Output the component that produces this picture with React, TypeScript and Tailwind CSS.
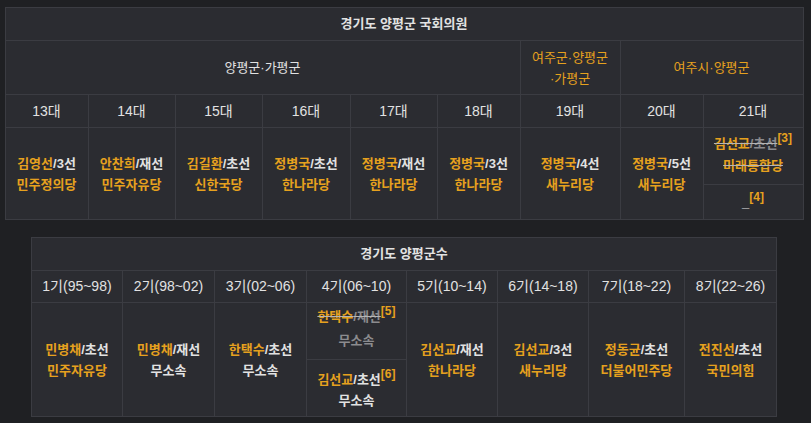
import React from "react";

const OR = "text-[#e6a11e]";
const WH = "text-[#e2e2e2]";
const GR = "text-[#8b8b8e]";

const cell = "border border-[#3b3c42] text-center align-middle p-0";

function Member({ name, term, party, partyWhite }: { name: string; term: string; party: string; partyWhite?: boolean }) {
  return (
    <div className="font-semibold leading-[21px]">
      <div>
        <span className={OR}>{name}</span>
        <span className={WH}>/{term}</span>
      </div>
      <div className={partyWhite ? WH : OR}>{party}</div>
    </div>
  );
}

const assembly = [
  { n: "13대", name: "김영선", term: "3선", party: "민주정의당" },
  { n: "14대", name: "안찬희", term: "재선", party: "민주자유당" },
  { n: "15대", name: "김길환", term: "초선", party: "신한국당" },
  { n: "16대", name: "정병국", term: "초선", party: "한나라당" },
  { n: "17대", name: "정병국", term: "재선", party: "한나라당" },
  { n: "18대", name: "정병국", term: "3선", party: "한나라당" },
  { n: "19대", name: "정병국", term: "4선", party: "새누리당" },
  { n: "20대", name: "정병국", term: "5선", party: "새누리당" },
];

const county = [
  { n: "1기(95~98)", name: "민병채", term: "초선", party: "민주자유당" },
  { n: "2기(98~02)", name: "민병채", term: "재선", party: "무소속", white: true },
  { n: "3기(02~06)", name: "한택수", term: "초선", party: "무소속", white: true },
  { n: "4기(06~10)" },
  { n: "5기(10~14)", name: "김선교", term: "재선", party: "한나라당" },
  { n: "6기(14~18)", name: "김선교", term: "3선", party: "새누리당" },
  { n: "7기(18~22)", name: "정동균", term: "초선", party: "더불어민주당" },
  { n: "8기(22~26)", name: "전진선", term: "초선", party: "국민의힘" },
];

function Sup({ children }: { children: React.ReactNode }) {
  return <span className={`${OR} align-[6px] text-[12px] leading-none font-semibold`}>{children}</span>;
}

export default function App() {
  return (
    <div
      className="min-h-screen w-full bg-[#1f2023] pt-[7px] text-[13px]"
      style={{ fontFamily: '"Liberation Sans", "Noto Sans CJK KR", sans-serif' }}
    >
      <div className="flex w-[808px] flex-col items-center gap-[17px]">
        {/* 국회의원 */}
        <table className="w-[798px] table-fixed border-collapse bg-[#2b2c31]">
          <colgroup>
            {[83, 87, 87, 88, 87, 83, 100, 83, 100].map((w, i) => (
              <col key={i} style={{ width: w }} />
            ))}
          </colgroup>
          <tbody>
            <tr className="h-[33px]">
              <td colSpan={9} className={`${cell} ${WH} font-bold`}>
                경기도 양평군 국회의원
              </td>
            </tr>
            <tr className="h-[54px]">
              <td colSpan={6} className={`${cell} ${WH}`}>
                양평군·가평군
              </td>
              <td className={`${cell} ${OR} leading-[21px] px-2`}>여주군·양평군 ·가평군</td>
              <td colSpan={2} className={`${cell} ${OR}`}>
                여주시·양평군
              </td>
            </tr>
            <tr className="h-[33px]">
              {assembly.map((a) => (
                <td key={a.n} className={`${cell} ${WH} text-[14px]`}>
                  {a.n}
                </td>
              ))}
              <td className={`${cell} ${WH} text-[14px]`}>21대</td>
            </tr>
            <tr className="h-[57px]">
              {assembly.map((a) => (
                <td key={a.n} rowSpan={2} className={cell}>
                  <Member name={a.name} term={a.term} party={a.party} />
                </td>
              ))}
              <td className={cell}>
                <div className="font-semibold leading-[22px] pb-[3px]">
                  <div>
                    <span className={`${OR} line-through decoration-[#b5b5b5]`}>김선교</span>
                    <span className={`${GR} line-through decoration-[#b5b5b5]`}>/초선</span>
                    <Sup>[3]</Sup>
                  </div>
                  <div className={`${OR} line-through decoration-[#b5b5b5]`}>미래통합당</div>
                </div>
              </td>
            </tr>
            <tr className="h-[35px]">
              <td className={`${cell} font-semibold`}>
                <span className={WH}>_</span>
                <Sup>[4]</Sup>
              </td>
            </tr>
          </tbody>
        </table>

        {/* 군수 */}
        <table className="w-[745px] table-fixed border-collapse bg-[#2b2c31]">
          <colgroup>
            {[91, 92, 92, 100, 91, 91, 96, 92].map((w, i) => (
              <col key={i} style={{ width: w }} />
            ))}
          </colgroup>
          <tbody>
            <tr className="h-[33px]">
              <td colSpan={8} className={`${cell} ${WH} font-bold`}>
                경기도 양평군수
              </td>
            </tr>
            <tr className="h-[32px]">
              {county.map((c) => (
                <td key={c.n} className={`${cell} ${WH} text-[14px]`}>
                  {c.n}
                </td>
              ))}
            </tr>
            <tr className="h-[57px]">
              {county.map((c) =>
                c.name ? (
                  <td key={c.n} rowSpan={2} className={cell}>
                    <Member name={c.name} term={c.term!} party={c.party!} partyWhite={c.white} />
                  </td>
                ) : (
                  <td key={c.n} className={cell}>
                    <div className="font-semibold leading-[24px] pb-[4px]">
                      <div>
                        <span className={`${OR} line-through decoration-[#b5b5b5]`}>한택수</span>
                        <span className={`${GR} line-through decoration-[#b5b5b5]`}>/재선</span>
                        <Sup>[5]</Sup>
                      </div>
                      <div className={GR}>무소속</div>
                    </div>
                  </td>
                )
              )}
            </tr>
            <tr className="h-[57px]">
              <td className={cell}>
                <div className="font-semibold leading-[21px] pt-[2px]">
                  <div>
                    <span className={OR}>김선교</span>
                    <span className={WH}>/초선</span>
                    <Sup>[6]</Sup>
                  </div>
                  <div className={WH}>무소속</div>
                </div>
              </td>
            </tr>
          </tbody>
        </table>
      </div>
    </div>
  );
}
